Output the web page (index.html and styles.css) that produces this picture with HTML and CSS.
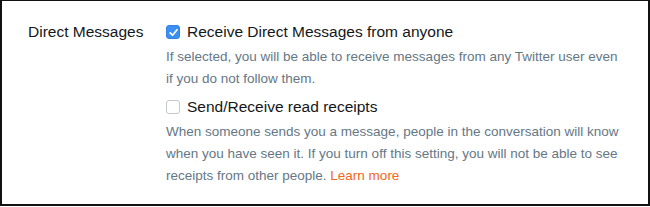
FILE: index.html
```html
<html>

<head>
    <title>Direct Messages</title>
    <link rel="stylesheet" href="styles.css">
</head>

<body>
    <div class="panel">
        <div class="row">
            <div class="row-label">Direct Messages</div>
            <div class="row-body">
                <label class="option">
                    <span class="box checked">
                        <svg viewBox="0 0 12 12" width="11" height="11">
                            <path d="M2.4 6.4 L5 9 L9.8 3" fill="none" stroke="#fff" stroke-width="1.8" stroke-linecap="round" stroke-linejoin="round"/>
                        </svg>
                    </span>
                    <span class="option-title">Receive Direct Messages from anyone</span>
                </label>
                <p class="hint">If selected, you will be able to receive messages from any Twitter user even<br>
                    if you do not follow them.</p>
                <label class="option">
                    <span class="box"></span>
                    <span class="option-title">Send/Receive read receipts</span>
                </label>
                <p class="hint">When someone sends you a message, people in the conversation will know<br>
                    when you have seen it. If you turn off this setting, you will not be able to see<br>
                    receipts from other people. <a href="#">Learn more</a></p>
            </div>
        </div>
    </div>
</body>

</html>
```

FILE: styles.css
```css
body {
    margin: 0;
    font-family: "Liberation Sans", Arial, sans-serif;
    background: #fff;
}

.panel {
    width: 650px;
    height: 206px;
    box-sizing: border-box;
    border: 2px solid #111;
    border-top-width: 1px;
    padding: 21px 0 0 26px;
}

.row {
    display: flex;
}

.row-label {
    width: 138px;
    flex-shrink: 0;
    font-size: 15.5px;
    color: #14171a;
    line-height: 20px;
}

.row-body {
    width: 470px;
}

.option {
    display: flex;
    align-items: center;
    gap: 7px;
    font-size: 15.5px;
    color: #14171a;
    line-height: 20px;
}

.box {
    width: 12px;
    height: 12px;
    border: 1px solid #c4c8cc;
    border-radius: 3px;
    display: flex;
    align-items: center;
    justify-content: center;
    background: #fff;
}

.box.checked {
    background: #3b8ff0;
    border-color: #2f83e6;
}

.hint {
    margin: 4px 0 7px;
    font-size: 13.5px;
    line-height: 22px;
    color: #657786;
}

.hint a {
    color: #f4661b;
    text-decoration: none;
}
```
